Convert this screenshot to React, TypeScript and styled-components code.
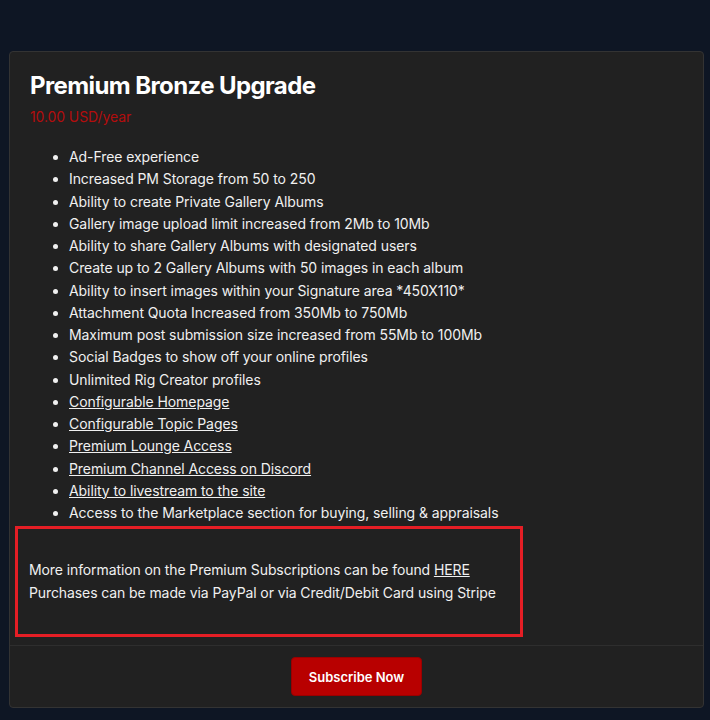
import React from 'react'
import styled, { createGlobalStyle } from 'styled-components';

const GlobalStyle = createGlobalStyle`
  body {
    margin: 0;
    background-color: #0e1624;
    font-family: Inter, "Noto Sans", sans-serif;
  }
`;

interface perk {
  text: string;
  link?: boolean;
}

const perks: perk[] = [
  { text: "Ad-Free experience" },
  { text: "Increased PM Storage from 50 to 250" },
  { text: "Ability to create Private Gallery Albums" },
  { text: "Gallery image upload limit increased from 2Mb to 10Mb" },
  { text: "Ability to share Gallery Albums with designated users" },
  { text: "Create up to 2 Gallery Albums with 50 images in each album" },
  { text: "Ability to insert images within your Signature area *450X110*" },
  { text: "Attachment Quota Increased from 350Mb to 750Mb" },
  { text: "Maximum post submission size increased from 55Mb to 100Mb" },
  { text: "Social Badges to show off your online profiles" },
  { text: "Unlimited Rig Creator profiles" },
  { text: "Configurable Homepage", link: true },
  { text: "Configurable Topic Pages", link: true },
  { text: "Premium Lounge Access", link: true },
  { text: "Premium Channel Access on Discord", link: true },
  { text: "Ability to livestream to the site", link: true },
  { text: "Access to the Marketplace section for buying, selling & appraisals" },
];

function App() {
  return (
    <Page>
      <GlobalStyle />
      <Card>
        <CardBody>
          <Title>Premium Bronze Upgrade</Title>
          <Price>10.00 USD/year</Price>
          <PerkList>
            {perks.map((p) => (
              <PerkItem key={p.text}>
                {p.link ? <PerkLink href="#">{p.text}</PerkLink> : p.text}
              </PerkItem>
            ))}
          </PerkList>
          <InfoBox>
            <InfoLine>
              More information on the Premium Subscriptions can be found <PerkLink href="#">HERE</PerkLink>
            </InfoLine>
            <InfoLine>Purchases can be made via PayPal or via Credit/Debit Card using Stripe</InfoLine>
          </InfoBox>
        </CardBody>
        <CardFooter>
          <SubscribeBtn>Subscribe Now</SubscribeBtn>
        </CardFooter>
      </Card>
    </Page>
  )
}

export default App

const Page = styled.div`
  padding: 51px 6px 10px 9px;
`;

const Card = styled.div`
  width: 695px;
  box-sizing: border-box;
  background-color: #212121;
  border: 1px solid #333333;
  border-radius: 4px;
`;

const CardBody = styled.div`
  padding: 18px 20px 8px 20px;
`;

const Title = styled.h2`
  margin: 0;
  font-size: 24px;
  line-height: 32px;
  font-weight: 700;
  color: #ffffff;
  letter-spacing: -0.6px;
`;

const Price = styled.div`
  margin-top: 6px;
  font-size: 14px;
  line-height: 18px;
  color: #b30d0d;
  letter-spacing: -0.1px;
`;

const PerkList = styled.ul`
  margin: 20px 0 0 0;
  padding-left: 39px;
  color: #f0f0f0;
  font-size: 14px;
  line-height: 22.25px;
  letter-spacing: -0.08px;
`;

const PerkItem = styled.li``;

const PerkLink = styled.a`
  color: #f0f0f0;
  text-decoration: underline;
`;

const InfoBox = styled.div`
  margin: 2px 0 0 -15px;
  width: 508px;
  height: 111px;
  box-sizing: border-box;
  border: 3px solid #e51e25;
  padding: 0 11px;
  display: flex;
  flex-direction: column;
  justify-content: center;
  color: #f0f0f0;
  font-size: 14px;
  line-height: 22.5px;
  letter-spacing: -0.1px;
`;

const InfoLine = styled.div``;

const CardFooter = styled.div`
  border-top: 1px solid #2e2e2e;
  display: flex;
  justify-content: center;
  padding: 11px 0 11px 0;
`;

const SubscribeBtn = styled.button`
  width: 131px;
  height: 39px;
  background-color: #b80000;
  border: 1px solid #9a0000;
  border-radius: 4px;
  color: #ffffff;
  font-family: Inter, sans-serif;
  font-size: 13px;
  font-weight: 600;
  cursor: pointer;
  &:hover {
    background-color: #d00000;
  }
`;
